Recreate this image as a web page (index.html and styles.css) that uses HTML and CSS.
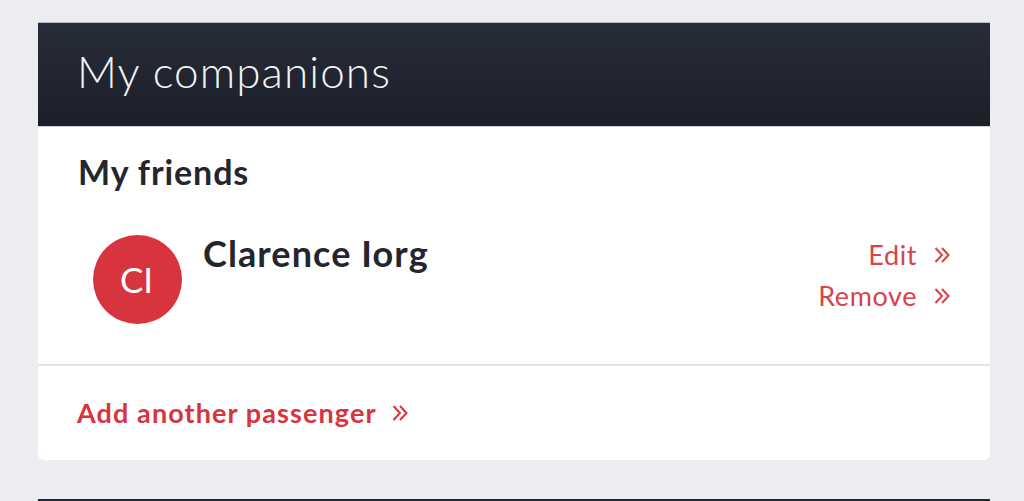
FILE: index.html
```html
<!DOCTYPE html>
<html lang="en">
<head>
<meta charset="utf-8">
<title>My companions</title>
<link rel="stylesheet" href="styles.css">
</head>
<body>
<main class="page">
  <section class="card">
    <header class="card-head"><h1>My companions</h1></header>
    <div class="friends">
      <h2>My friends</h2>
      <div class="person">
        <div class="avatar">CI</div>
        <div class="name">Clarence Iorg</div>
        <div class="actions">
          <a class="action">Edit<svg class="chev" viewBox="0 0 16 16"><path d="M1.5 1 8 8 1.5 15M8 1 14.5 8 8 15"/></svg></a>
          <a class="action">Remove<svg class="chev" viewBox="0 0 16 16"><path d="M1.5 1 8 8 1.5 15M8 1 14.5 8 8 15"/></svg></a>
        </div>
      </div>
    </div>
    <div class="card-foot">
      <a class="add">Add another passenger<svg class="chev" viewBox="0 0 16 16"><path d="M1.5 1 8 8 1.5 15M8 1 14.5 8 8 15"/></svg></a>
    </div>
  </section>
  <div class="next-card"></div>
</main>
</body>
</html>
```

FILE: styles.css
```css
* { box-sizing: border-box; }
html, body { margin: 0; height: 501px; overflow: hidden; }
body { background: #ebedf1; font-family: "Lato", "Liberation Sans", sans-serif; color: #23262e; }
.page { padding: 22px 34px 0 38px; }
.card { background: #fff; border-radius: 0 0 6px 6px; height: 438px; display: flex; flex-direction: column; }
.card-head { height: 105px; padding: 23px 39px 0; background: linear-gradient(#272c39, #1b1f29); border-top: 1px solid #b9bcc3; border-bottom: 1px solid #cfd1d6; }
h1 { margin: 0; font-size: 44px; line-height: 50px; font-weight: 300; color: #f2f3f5; letter-spacing: 1.1px; }
.friends { height: 239px; padding: 24px 40px 0 40px; border-bottom: 2px solid #e3e4e6; }
h2 { margin: 0; font-size: 34px; line-height: 42px; font-weight: 700; color: #23262e; letter-spacing: .9px; }
.person { display: flex; align-items: flex-start; margin-top: 42px; padding-left: 15px; }
.avatar { width: 89px; height: 89px; padding: 0 2px 2px 0; border-radius: 50%; background: #d8343e; color: #fff; display: flex; align-items: center; justify-content: center; font-size: 35px; }
.name { margin: -2px 0 0 21px; font-size: 36px; line-height: 40px; font-weight: 700; flex: 1; letter-spacing: 1.1px; }
.actions { display: flex; flex-direction: column; align-items: flex-end; gap: 8px; padding-top: 3px; }
.action { display: flex; align-items: center; font-size: 27px; line-height: 33px; font-weight: 400; letter-spacing: .6px; color: #d8434c; }
.chev { width: 16px; height: 16px; fill: none; stroke: currentColor; stroke-width: 2; margin-left: 17px; }
.card-foot { padding: 30px 39px; }
.add { display: inline-flex; align-items: center; font-size: 27px; line-height: 34px; font-weight: 700; letter-spacing: 1.1px; color: #d8343e; }
.add .chev { margin-left: 15px; }
.next-card { height: 2px; margin-top: 39px; background: #232733; }
```
